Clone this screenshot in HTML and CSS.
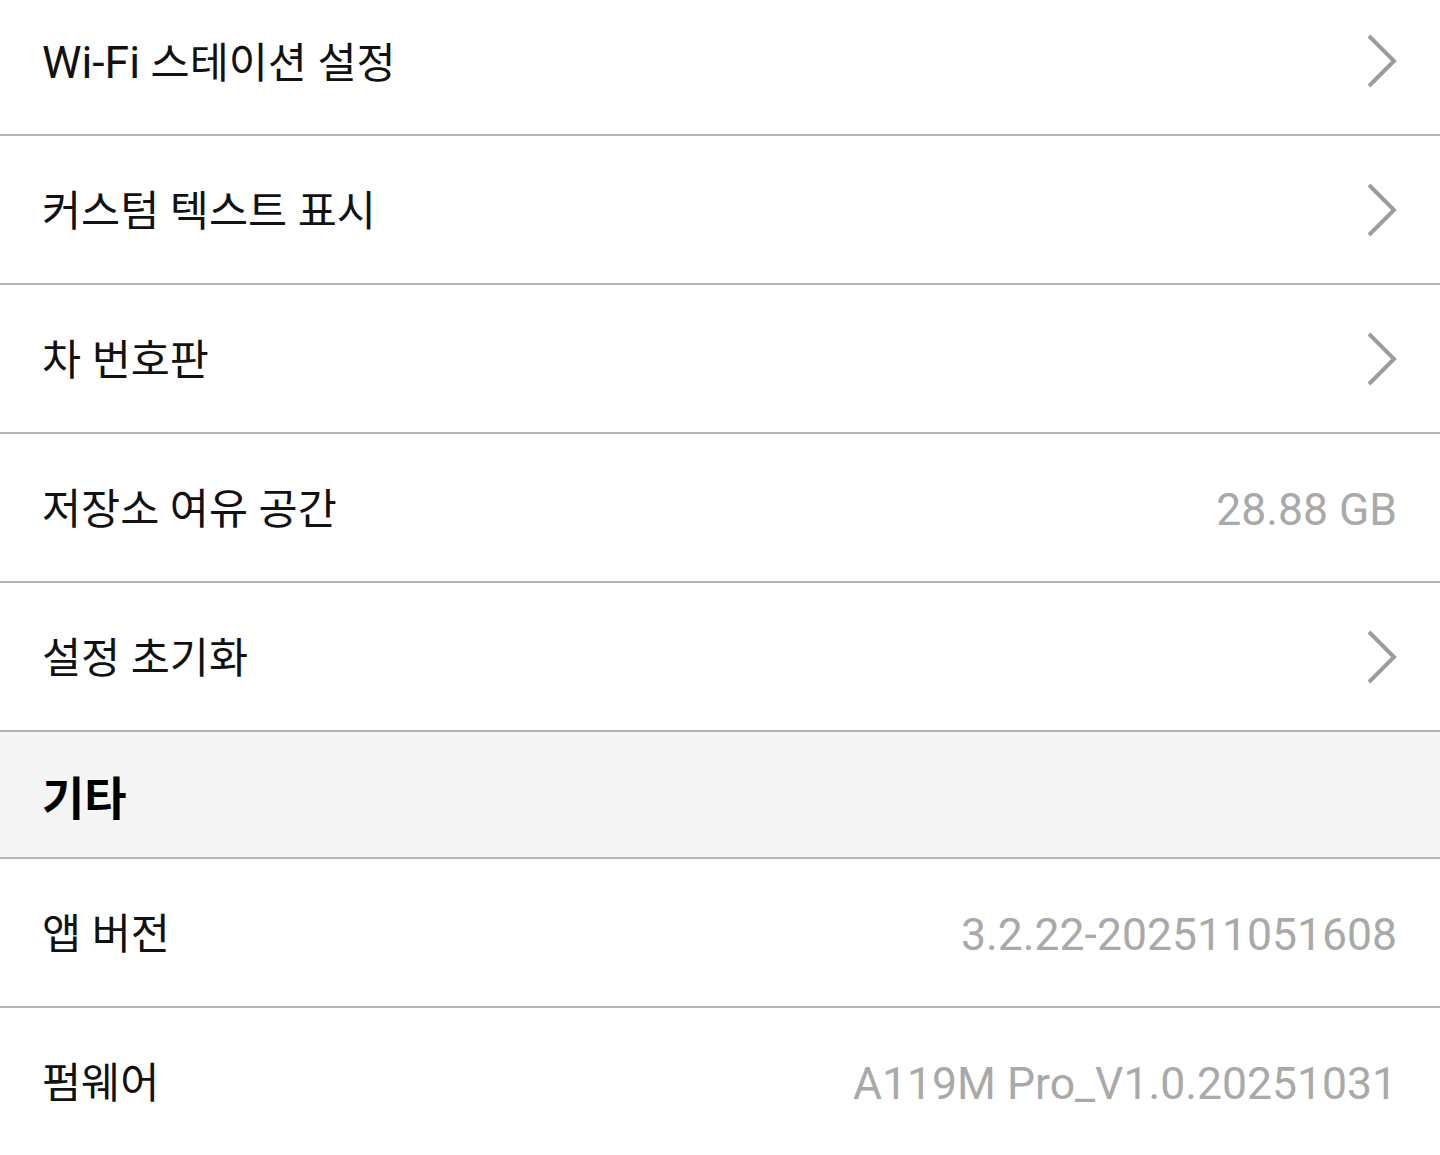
FILE: index.html
```html
<!DOCTYPE html>
<html lang="ko">
<head>
<meta charset="utf-8">
<link rel="stylesheet" href="styles.css">
</head>
<body>
<div class="list">
  <div class="row"><span class="label"><span class="latin">Wi-Fi</span> 스테이션 설정</span><svg class="chev" viewBox="0 0 32 56"><path d="M3 3 L28 28 L3 53"/></svg></div>
  <div class="row"><span class="label">커스텀 텍스트 표시</span><svg class="chev" viewBox="0 0 32 56"><path d="M3 3 L28 28 L3 53"/></svg></div>
  <div class="row"><span class="label">차 번호판</span><svg class="chev" viewBox="0 0 32 56"><path d="M3 3 L28 28 L3 53"/></svg></div>
  <div class="row"><span class="label">저장소 여유 공간</span><span class="value">28.88 GB</span></div>
  <div class="row"><span class="label">설정 초기화</span><svg class="chev" viewBox="0 0 32 56"><path d="M3 3 L28 28 L3 53"/></svg></div>
  <div class="section">기타</div>
  <div class="row"><span class="label">앱 버전</span><span class="value">3.2.22-202511051608</span></div>
  <div class="row"><span class="label">펌웨어</span><span class="value">A119M Pro_V1.0.20251031</span></div>
</div>
</body>
</html>
```
FILE: styles.css
```css
html, body {
  margin: 0;
  padding: 0;
  background: #ffffff;
  overflow: hidden;
}
body {
  font-family: Roboto, "Noto Sans CJK KR", sans-serif;
  color: #111;
}
.list {
  margin-top: -13px;
}
.row {
  height: 147px;
  border-bottom: 2px solid #b4b4b4;
  display: flex;
  align-items: center;
  justify-content: space-between;
  padding: 0 43px 0 42px;
}
.label {
  font-size: 42.5px;
  line-height: 1;
  margin-top: 6px;
}
.latin {
  font-size: 44.5px;
}
.value {
  font-size: 44.5px;
  color: #a9a9a9;
  line-height: 1;
  margin-top: 6px;
}
.chev {
  width: 32px;
  height: 56px;
  margin-right: -1px;
}
.chev path {
  fill: none;
  stroke: #9c9c9c;
  stroke-width: 4;
}
.section {
  height: 125px;
  background: #f5f5f5;
  border-bottom: 2px solid #b4b4b4;
  display: flex;
  align-items: center;
  padding: 0 42px;
  font-size: 46px;
  font-weight: 700;
  color: #000;
}
```
